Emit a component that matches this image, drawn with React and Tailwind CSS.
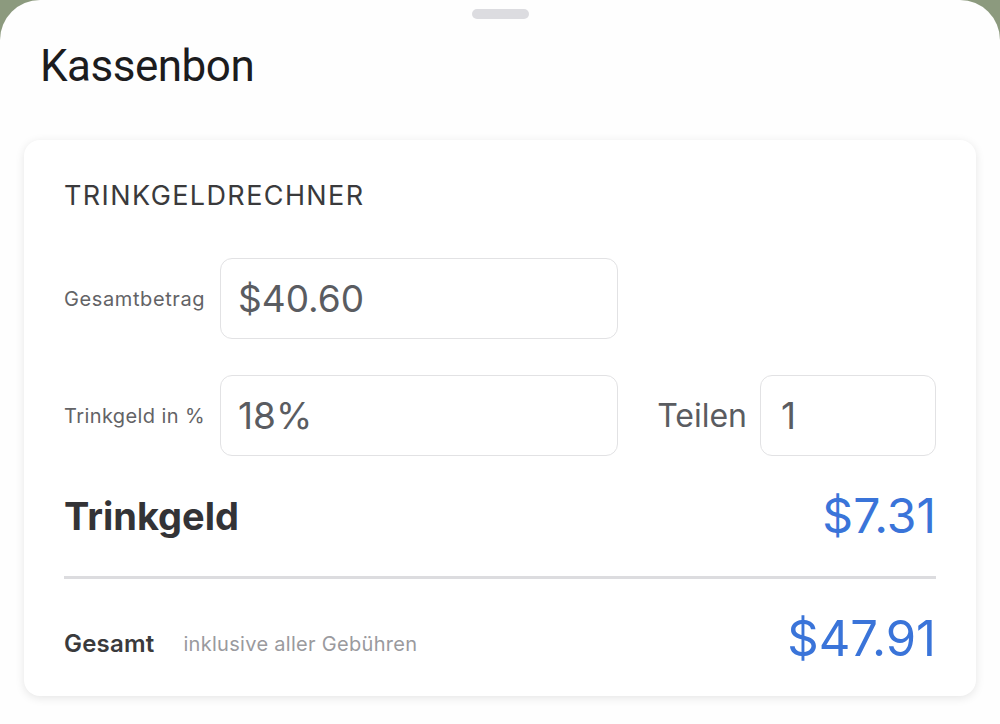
export default function App() {
  return (
    <div className="w-[1000px] h-[724px] bg-[#8c9a7e] overflow-hidden">
      <div className="h-full bg-[#fefefe] rounded-t-[40px] flex flex-col">
        <div className="flex justify-center pt-[9px]">
          <div className="w-[57px] h-[10px] rounded-full bg-[#dcdce0]" />
        </div>
        <h1 className="mt-[23px] ml-[40px] text-[44px] leading-[48px] text-[#1c1c1e] font-['Roboto',sans-serif] tracking-[-0.5px]">
          Kassenbon
        </h1>
        <div className="mt-[50px] mx-[24px] h-[556px] bg-white rounded-[16px] shadow-[0_2px_10px_rgba(0,0,0,0.10)] px-[40px] pt-[38px] font-['Inter',sans-serif]">
          <div className="text-[27px] leading-[36px] text-[#3a3a3c] tracking-[1.4px]">TRINKGELDRECHNER</div>

          <div className="mt-[44px] flex items-center">
            <div className="w-[156px] text-[20px] text-[#636366] tracking-[0.6px]">Gesamtbetrag</div>
            <div className="w-[398px] h-[81px] border border-[#e2e2e4] rounded-[12px] flex items-center px-[17px] text-[37px] text-[#5a5c61]">
              $40.60
            </div>
          </div>

          <div className="mt-[36px] flex items-center">
            <div className="w-[156px] text-[20px] text-[#636366] tracking-[0.4px]">Trinkgeld in %</div>
            <div className="w-[398px] h-[81px] border border-[#e2e2e4] rounded-[12px] flex items-center px-[17px] text-[37px] text-[#5a5c61]">
              18%
            </div>
            <div className="ml-auto text-[32px] text-[#5a5c61] mr-[13px]">Teilen</div>
            <div className="w-[176px] h-[81px] border border-[#e2e2e4] rounded-[12px] flex items-center px-[20px] text-[37px] text-[#5a5c61]">
              1
            </div>
          </div>

          <div className="mt-[36px] flex items-center justify-between h-[48px]">
            <div className="text-[38px] font-bold text-[#333336]">Trinkgeld</div>
            <div className="text-[48px] text-[#3a74d9]">$7.31</div>
          </div>

          <div className="mt-[36px] h-[3px] bg-[#dcdcdf]" />

          <div className="mt-[35px] flex items-center h-[60px]">
            <div className="text-[24px] font-semibold text-[#3a3a3c] tracking-[0.2px]">Gesamt</div>
            <div className="ml-[29px] text-[20px] text-[#9a9a9e] tracking-[0.3px]">inklusive aller Gebühren</div>
            <div className="ml-auto mb-[10px] text-[49px] leading-[60px] text-[#3a74d9]">$47.91</div>
          </div>
        </div>
      </div>
    </div>
  );
}
